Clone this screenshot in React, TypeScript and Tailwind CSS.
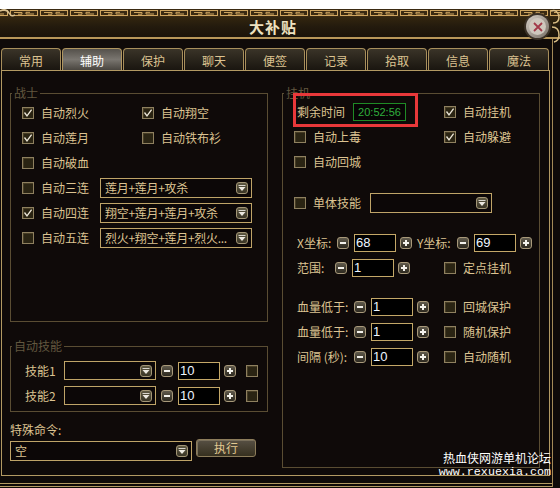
import React from 'react';

// Small building blocks of the game-style dialog
function Check({ on }: { on?: boolean }) {
  return (
    <span className="w-[12px] h-[12px] shrink-0 border border-[#8e805f] bg-[#2a2413] shadow-[inset_1px_1px_0_#463c24] flex items-center justify-center">
      {on && (
        <svg width="10" height="10" viewBox="0 0 10 10">
          <path d="M1.5 4.5 L4 7.8 L8.6 1.6" fill="none" stroke="#ece6d8" strokeWidth="1.3" />
        </svg>
      )}
    </span>
  );
}

function CheckItem({ on, label, className = '' }: { on?: boolean; label: string; className?: string }) {
  return (
    <div className={`flex items-center gap-[7px] ${className}`}>
      <Check on={on} />
      <span className="text-[12px] leading-[16px] text-[#dcc391] whitespace-nowrap">{label}</span>
    </div>
  );
}

function DropArrow() {
  return (
    <span className="w-[12px] h-[12px] shrink-0 rounded-[3px] border border-[#a39676] bg-linear-to-b from-[#5e5842] to-[#3a3526] flex items-center justify-center">
      <svg width="8" height="8" viewBox="0 0 8 8">
        <rect x="0.5" y="1" width="7" height="1" fill="#d8d4cc" />
        <path d="M0.5 3 H7.5 L4 7 Z" fill="#ece8e0" />
      </svg>
    </span>
  );
}

function Select({ text, className }: { text?: string; className: string }) {
  return (
    <div className={`flex items-center justify-between gap-[2px] border border-[#bfa468] bg-[#0c0707] pl-[4px] pr-[3px] ${className}`}>
      <span className="text-[12px] leading-[16px] tracking-[-0.3px] text-[#dcc391] whitespace-nowrap">{text}</span>
      <DropArrow />
    </div>
  );
}

function StepBtn({ plus }: { plus?: boolean }) {
  return (
    <span className="w-[12px] h-[12px] shrink-0 rounded-[3px] border border-[#a8997a] bg-linear-to-b from-[#605a4c] to-[#2e2a20] flex items-center justify-center">
      <svg width="8" height="8" viewBox="0 0 8 8">
        <rect x="1" y="3" width="6" height="2" fill="#f4f2ec" />
        {plus && <rect x="3" y="1" width="2" height="6" fill="#f4f2ec" />}
      </svg>
    </span>
  );
}

function Stepper({ v }: { v: string }) {
  return (
    <div className="flex items-center">
      <StepBtn />
      <span className="ml-[5px] w-[42px] h-[18px] shrink-0 border border-[#c4a868] bg-black pl-[1px] text-[13px] leading-[16px] text-[#eef6ff] font-['Liberation_Sans',sans-serif]">
        {v}
      </span>
      <span className="ml-[4px]">
        <StepBtn plus />
      </span>
    </div>
  );
}

function Label({ children, className = '' }: { children: React.ReactNode; className?: string }) {
  return <span className={`shrink-0 text-[12px] leading-[16px] text-[#dcc391] whitespace-nowrap ${className}`}>{children}</span>;
}

const TABS = ['常用', '辅助', '保护', '聊天', '便签', '记录', '拾取', '信息', '魔法'];

export default function App() {
  return (
    <div className="w-[560px] h-[488px] bg-white overflow-hidden relative font-['Noto_Sans_CJK_SC','Noto_Sans',sans-serif]">
      <div className="mt-[9px] h-[479px] bg-[#0f0a09] flex flex-col">
        {/* greek-key border band */}
        <svg width="560" height="8" className="block shrink-0">
          <defs>
            <pattern id="key" x="9" width="30" height="8" patternUnits="userSpaceOnUse">
              <rect width="30" height="8" fill="#3a2a12" />
              <rect x="1.5" y="1.5" width="27" height="5" fill="none" stroke="#cfa660" strokeWidth="1" />
              <path d="M5 3.5 H13 V5.2 H9" fill="none" stroke="#cfa660" strokeWidth="1" />
              <path d="M25 5 H17 V3.3 H21" fill="none" stroke="#cfa660" strokeWidth="1" />
            </pattern>
          </defs>
          <rect width="560" height="8" fill="url(#key)" />
          <path d="M0 2 Q6 -1 9 4 Q11 8 15 6" fill="none" stroke="#d8c090" strokeWidth="1.5" />
        </svg>

        {/* title bar */}
        <div className="h-[22px] shrink-0 border-b-2 border-[#b8975a] bg-linear-to-b from-[#33260f] via-[#231a0d] to-[#1a130a] flex items-center justify-center pr-[14px]">
          <span className="text-[15px] leading-[18px] font-bold text-[#efe2c0] tracking-[1px]">大补贴</span>
        </div>

        {/* tabs + panel */}
        <div className="w-[553px] border-r border-[#a48a58] flex flex-col">
          <div className="mt-[9px] h-[22px] flex gap-[1px] pl-[1px]">
            {TABS.map((t, i) =>
              i === 1 ? (
                <div
                  key={t}
                  className="w-[60px] h-[22px] rounded-t-[4px] border border-b-0 border-[#b09660] bg-linear-to-b from-[#55514b] via-[#7a7670] to-[#4a4640] flex items-center justify-center pt-[2px]"
                >
                  <span className="text-[12px] leading-[14px] text-white">{t}</span>
                </div>
              ) : (
                <div
                  key={t}
                  className="w-[60px] h-[22px] rounded-t-[4px] border border-b-0 border-[#a88f5c] bg-linear-to-b from-[#3a3428] to-[#1a1610] flex items-center justify-center pt-[2px]"
                >
                  <span className="text-[12px] leading-[14px] text-[#dcc391]">{t}</span>
                </div>
              )
            )}
          </div>

          <div className="ml-[1px] w-[549px] h-[406px] border border-[#b39a63] flex pt-[15px]">
            {/* left column */}
            <div className="ml-[8px] w-[258px] flex flex-col">
              <fieldset className="h-[236px] border border-[#5a4d33]">
                <legend className="ml-[1px] px-[2px] text-[12px] leading-[14px] text-[#62573f]">战士</legend>
                <div className="pl-[11px] flex flex-col">
                  <div className="flex items-center h-[25px]">
                    <CheckItem on label="自动烈火" className="w-[120px]" />
                    <CheckItem on label="自动翔空" />
                  </div>
                  <div className="flex items-center h-[25px]">
                    <CheckItem on label="自动莲月" className="w-[120px]" />
                    <CheckItem label="自动铁布衫" />
                  </div>
                  <div className="flex items-center h-[25px]">
                    <CheckItem label="自动破血" />
                  </div>
                  <div className="flex items-center h-[25px]">
                    <CheckItem label="自动三连" className="w-[78px]" />
                    <Select text="莲月+莲月+攻杀" className="w-[152px] h-[20px]" />
                  </div>
                  <div className="flex items-center h-[25px]">
                    <CheckItem on label="自动四连" className="w-[78px]" />
                    <Select text="翔空+莲月+莲月+攻杀" className="w-[152px] h-[20px]" />
                  </div>
                  <div className="flex items-center h-[25px]">
                    <CheckItem label="自动五连" className="w-[78px]" />
                    <Select text="烈火+翔空+莲月+烈火..." className="w-[152px] h-[20px]" />
                  </div>
                </div>
              </fieldset>

              <fieldset className="mt-[17px] h-[73px] border border-[#5a4d33]">
                <legend className="ml-[1px] px-[2px] text-[12px] leading-[14px] text-[#62573f]">自动技能</legend>
                <div className="pl-[14px] pt-[5px] flex flex-col">
                  {['技能1', '技能2'].map(s => (
                    <div key={s} className="flex items-center h-[25px]">
                      <Label className="w-[39px]">{s}</Label>
                      <Select className="w-[92px] h-[19px]" />
                      <span className="ml-[5px]">
                        <Stepper v="10" />
                      </span>
                      <span className="ml-[10px]">
                        <Check />
                      </span>
                    </div>
                  ))}
                </div>
              </fieldset>

              <Label className="mt-[10px] block">特殊命令:</Label>
              <div className="mt-[1px] flex items-start">
                <Select text="空" className="mt-[2px] w-[182px] h-[20px]" />
                <button className="ml-[4px] w-[60px] h-[18px] rounded-[3px] border border-[#8c7c5a] bg-linear-to-b from-[#575044] to-[#36301f] shadow-[inset_1px_1px_0_#7a705c] text-[12px] leading-[14px] text-[#e2c992]">
                  执行
                </button>
              </div>
            </div>

            {/* right column */}
            <div className="ml-[14px] w-[258px]">
              <fieldset className="relative h-[382px] border border-[#5a4d33]">
                <legend className="ml-[1px] px-[2px] text-[12px] leading-[14px] text-[#62573f]">挂机</legend>
                <div className="pl-[11px] flex flex-col">
                  <div className="flex items-center h-[24px]">
                    <div className="w-[150px] flex items-center pl-[3px]">
                      <Label>剩余时间</Label>
                      <span className="ml-[8px] w-[53px] h-[18px] border border-[#1f8a25] bg-[#070505] text-center text-[11px] leading-[16px] text-[#2fae3c] font-['Liberation_Sans',sans-serif]">
                        20:52:56
                      </span>
                    </div>
                    <CheckItem on label="自动挂机" />
                  </div>
                  <div className="flex items-center h-[25px]">
                    <CheckItem label="自动上毒" className="w-[150px]" />
                    <CheckItem on label="自动躲避" />
                  </div>
                  <div className="flex items-center h-[25px]">
                    <CheckItem label="自动回城" />
                  </div>
                  <div className="mt-[16px] flex items-center h-[25px]">
                    <CheckItem label="单体技能" className="w-[76px]" />
                    <Select className="w-[122px] h-[20px]" />
                  </div>
                  <div className="mt-[15px] flex items-center h-[25px] pl-[3px]">
                    <Label className="w-[40px]">X坐标:</Label>
                    <Stepper v="68" />
                    <Label className="ml-[5px] w-[40px]">Y坐标:</Label>
                    <Stepper v="69" />
                  </div>
                  <div className="flex items-center h-[25px] pl-[3px]">
                    <Label className="w-[38px]">范围:</Label>
                    <Stepper v="1" />
                    <CheckItem label="定点挂机" className="ml-[34px]" />
                  </div>
                  <div className="mt-[14px] flex items-center h-[25px] pl-[3px]">
                    <Label className="w-[57px]">血量低于:</Label>
                    <Stepper v="1" />
                    <CheckItem label="回城保护" className="ml-[15px]" />
                  </div>
                  <div className="flex items-center h-[25px] pl-[3px]">
                    <Label className="w-[57px]">血量低于:</Label>
                    <Stepper v="1" />
                    <CheckItem label="随机保护" className="ml-[15px]" />
                  </div>
                  <div className="flex items-center h-[25px] pl-[3px]">
                    <Label className="w-[57px]">间隔 (秒):</Label>
                    <Stepper v="10" />
                    <CheckItem label="自动随机" className="ml-[15px]" />
                  </div>
                </div>
                {/* red annotation box */}
                <div className="absolute left-[10px] top-[-7px] w-[125px] h-[34px] border-[3px] border-[#e8383a]" />
              </fieldset>
            </div>
          </div>

          <div className="h-[7px]" />
          <div className="h-[1px] bg-[#b39a63]" />
          <div className="h-[2px]" />
          <div className="h-[1px] bg-[#b39a63]" />
        </div>
      </div>

      {/* close button */}
      <div className="absolute left-[524px] top-[13px] w-[27px] h-[27px] rounded-full bg-[#3a3025] p-[2px]">
        <div className="w-full h-full rounded-full bg-linear-to-br from-[#d6cfc6] to-[#7a7168] p-[3px]">
          <div className="w-full h-full rounded-full bg-[#cfc7bd] flex items-center justify-center">
            <svg width="12" height="12" viewBox="0 0 12 12">
              <path d="M2 2 L10 10 M10 2 L2 10" stroke="#a23848" strokeWidth="1.8" />
            </svg>
          </div>
        </div>
      </div>

      {/* right top ornament */}
      <svg className="absolute right-0 top-[9px]" width="10" height="34" viewBox="0 0 10 34">
        <path d="M1 2 Q8 0 9 8 Q9 14 3 14 M2 18 Q9 18 9 26 Q9 32 4 33" fill="none" stroke="#d8bc84" strokeWidth="1.5" />
      </svg>

      {/* watermark */}
      <div className="absolute right-[9px] top-[450px] flex flex-col items-end">
        <span className="text-[12px] leading-[15px] text-white">热血侠网游单机论坛</span>
        <span className="mt-[1px] text-[11.7px] leading-[12px] text-white font-['Liberation_Mono',monospace]">www.rexuexia.com</span>
      </div>
    </div>
  );
}
